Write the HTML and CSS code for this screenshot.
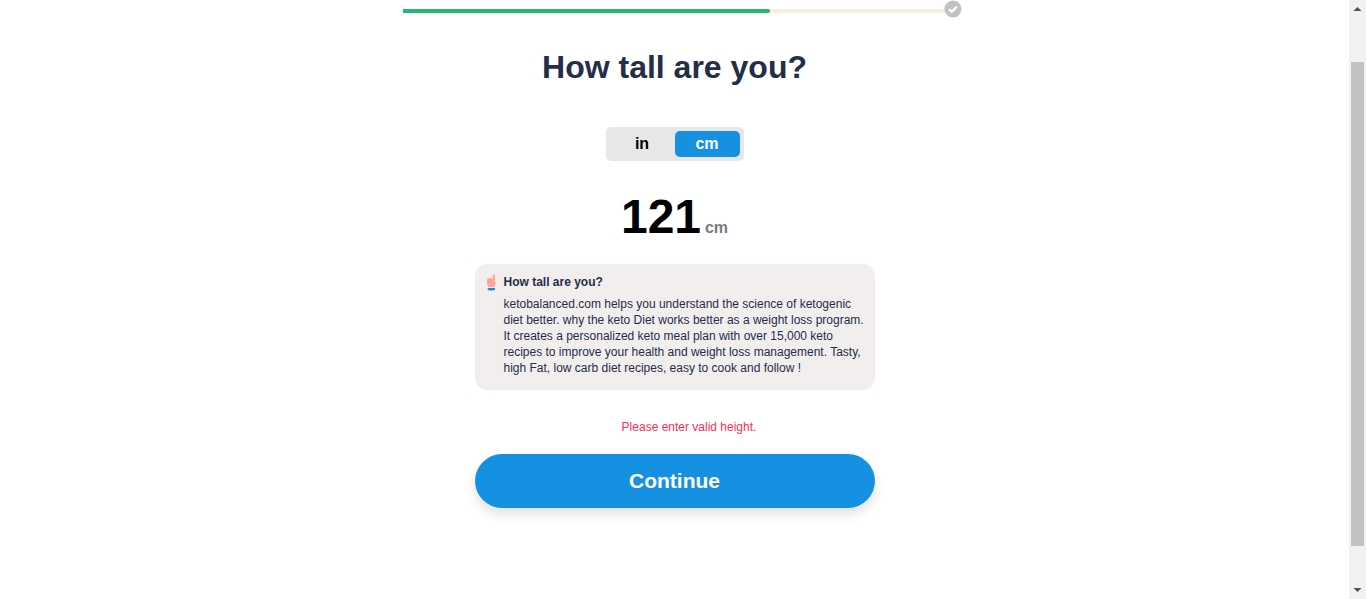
FILE: index.html
```html
<!DOCTYPE html>
<html lang="en">
<head>
<meta charset="utf-8">
<meta name="viewport" content="width=device-width, initial-scale=1">
<title>How tall are you?</title>
<link rel="stylesheet" href="styles.css">
</head>
<body>
<div class="viewport">
  <main class="page">
    <div class="progress">
      <div class="progress-fill"></div>
      <svg class="progress-check" viewBox="0 0 18 18" aria-hidden="true">
        <circle cx="9" cy="9" r="8.6" fill="#c2c2c2"/>
        <path d="M5.1 9.4 7.8 11.9 12.8 6.4" fill="none" stroke="#fff" stroke-width="2.3"/>
      </svg>
    </div>
    <h1 class="title">How tall are you?</h1>
    <form class="form">
      <div class="units">
        <button class="unit" type="button">in</button>
        <button class="unit unit-active" type="button">cm</button>
      </div>
      <div class="measure">
        <input class="measure-input" id="height" type="text" inputmode="numeric" value="121">
        <label class="measure-unit" for="height">cm</label>
      </div>
      <section class="note">
        <svg class="note-icon" viewBox="0 0 12 17" aria-hidden="true">
          <path d="M7.6 1.3Q7.7.2 8.8.2T10 1.3V7.4Q10.7 8 10.6 9.5T9.6 12.4V13.8H3.2V12.2L2 10V5.6Q2.2 4.3 3.6 4.4 4.4 3.7 5.6 4.2 6.8 3.8 7.6 4.7Z" fill="#ffab9b"/>
          <path d="M3.9 5V8M5.8 5V8M2.4 8.4H7.4Q9.2 8.7 8.6 10T6.2 11" fill="none" stroke="#f18f80" stroke-width=".6"/>
          <path d="M3 13.2H9.8V14H3Z" fill="#e4eef5"/>
          <path d="M2.7 13.9H10V16Q6.3 17 2.7 16Z" fill="#1690df"/>
        </svg>
        <div class="note-body">
          <h2 class="note-title">How tall are you?</h2>
          <p class="note-text">ketobalanced.com helps you understand the science of ketogenic diet better. why the keto Diet works better as a weight loss program. It creates a personalized keto meal plan with over 15,000 keto recipes to improve your health and weight loss management. Tasty, high Fat, low carb diet recipes, easy to cook and follow !</p>
        </div>
      </section>
      <p class="error" role="alert">Please enter valid height.</p>
      <button class="continue" type="button">Continue</button>
    </form>
  </main>
  <div class="scrollbar" aria-hidden="true">
    <svg class="scroll-arrow" viewBox="0 0 17 17"><path d="M4.5 11 8.5 7 12.5 11Z" fill="#505050"/></svg>
    <div class="scroll-track"><div class="scroll-thumb"></div></div>
    <svg class="scroll-arrow" viewBox="0 0 17 17"><path d="M4.5 6 8.5 10 12.5 6Z" fill="#505050"/></svg>
  </div>
</div>
</body>
</html>
```
FILE: styles.css
```css
* {
  box-sizing: border-box;
}

body {
  margin: 0;
  background: #fff;
  color: #242d49;
  font-family: "Liberation Sans", Arial, sans-serif;
}

h1, h2, p {
  margin: 0;
}

button, input {
  border: 0;
  padding: 0;
  font-family: inherit;
  font-weight: 700;
}

.viewport {
  display: flex;
  min-height: 100vh;
}

.page {
  flex: 1;
  display: flex;
  flex-direction: column;
  align-items: center;
  padding: 9px 16px 32px;
}

.progress {
  position: relative;
  width: 100%;
  max-width: 544px;
  height: 4px;
  background: #f8efe0;
  border-radius: 2px;
}

.progress-fill {
  width: 67.5%;
  height: 100%;
  background: #26b573;
  border-radius: 0 2px 2px 0;
}

.progress-check {
  position: absolute;
  top: -9px;
  right: -15px;
  width: 18px;
  height: 18px;
}

.title {
  margin-top: 34px;
  font-size: 32px;
  line-height: 40px;
  text-align: center;
}

.form {
  display: flex;
  flex-direction: column;
  align-items: center;
  width: 100%;
  max-width: 400px;
  margin-top: 40px;
}

.units {
  display: flex;
  padding: 4px;
  border-radius: 5px;
  background: #e7e7e7;
}

.unit {
  width: 65px;
  height: 26px;
  border-radius: 5px;
  background: transparent;
  color: #000;
  font-size: 16px;
}

.unit-active {
  background: #1690e1;
  color: #fff;
}

.measure {
  display: flex;
  align-items: baseline;
  gap: 4px;
  margin-top: 27px;
}

.measure-input {
  width: 80px;
  height: 56px;
  background: transparent;
  color: #000;
  font-size: 48px;
}

.measure-unit {
  color: #777b83;
  font-size: 16px;
  font-weight: 700;
}

.note {
  display: flex;
  gap: 7px;
  width: 100%;
  margin-top: 20px;
  padding: 10px 10px 14px;
  border-radius: 12px;
  background: #f2eeed;
}

.note-icon {
  flex: none;
  width: 12px;
  height: 17px;
}

.note-title {
  font-size: 12px;
  line-height: 16px;
}

.note-text {
  margin-top: 6px;
  font-size: 12px;
  line-height: 16px;
}

.error {
  margin-top: 29px;
  padding-left: 29px;
  color: #ff2d55;
  font-size: 12px;
  line-height: 16px;
}

.continue {
  width: 100%;
  height: 54px;
  margin-top: 19px;
  border-radius: 27px;
  background: #1690e1;
  box-shadow: 0 6px 12px rgba(0, 0, 0, 0.12);
  color: #fff;
  font-size: 21px;
}

.scrollbar {
  display: flex;
  flex-direction: column;
  width: 17px;
  background: #f1f1f1;
}

.scroll-arrow {
  display: block;
  width: 17px;
  height: 17px;
}

.scroll-track {
  flex: 1;
  padding: 45px 2px 36px;
}

.scroll-thumb {
  height: 100%;
  background: #c1c1c1;
}
```
